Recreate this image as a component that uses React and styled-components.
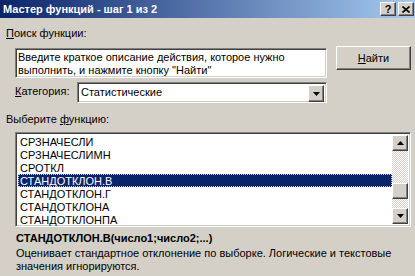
import React from 'react'
import styled, { createGlobalStyle, css } from 'styled-components'

const GlobalStyle = createGlobalStyle`
    html, body {
        margin: 0;
        padding: 0;
        background: #d4d0c8;
    }
    body {
        font-family: 'Liberation Sans', Arial, sans-serif;
        font-size: 11px;
        color: #000;
    }
    * {
        box-sizing: border-box;
    }
`

const raised = css`
    border: 1px solid;
    border-color: #fff #404040 #404040 #fff;
    box-shadow: inset -1px -1px #808080, inset 1px 1px #d4d0c8;
    background: #d4d0c8;
`

const sunken = css`
    border: 1px solid;
    border-color: #808080 #fff #fff #808080;
    box-shadow: inset 1px 1px #404040, inset -1px -1px #d4d0c8;
    background: #fff;
`

const Dialog = styled.div`
    width: 415px;
    height: 276px;
    background: #d4d0c8;
    overflow: hidden;
    display: flex;
    flex-direction: column;
`

const TitleBar = styled.div`
    height: 18px;
    flex: none;
    display: flex;
    align-items: center;
    padding: 0 1px 0 3px;
    background: linear-gradient(to right, #0a246a, #a6caf0);
    color: #fff;
    font-weight: bold;
    line-height: 13px;
`

const TitleButtons = styled.div`
    margin-left: auto;
    display: flex;
    gap: 2px;
`

const CaptionButton = styled.div`
    ${raised};
    width: 16px;
    height: 14px;
    display: flex;
    align-items: center;
    justify-content: center;
    color: #000;
    font-weight: bold;
    font-size: 11px;
    line-height: 11px;
`

const Content = styled.div`
    padding: 9px 4px 0 6px;
    display: flex;
    flex-direction: column;
`

const Label = styled.div`
    line-height: 13px;
    height: 13px;
    margin-top: ${props => props.mt || 0}px;
`

const U = styled.span`
    text-decoration: underline;
`

const SearchRow = styled.div`
    display: flex;
    align-items: flex-start;
    gap: 9px;
    margin: 6px 0 0 9px;
`

const SearchBox = styled.div`
    ${sunken};
    width: 312px;
    height: 30px;
    margin-top: 2px;
    padding: 2px 2px 0;
    line-height: 13px;
`

const PushButton = styled.div`
    ${raised};
    width: 75px;
    height: 24px;
    display: flex;
    align-items: center;
    justify-content: center;
    line-height: 13px;
`

const CategoryRow = styled.div`
    display: flex;
    align-items: center;
    margin: 4px 0 0 9px;
`

const CategoryLabel = styled.div`
    width: 62px;
    line-height: 13px;
    margin-top: -3px;
`

const Combo = styled.div`
    ${sunken};
    width: 250px;
    height: 21px;
    padding: 2px;
    display: flex;
    align-items: stretch;
`

const ComboText = styled.div`
    flex: 1;
    padding: 1px 0 0 1px;
    line-height: 13px;
`

const ArrowButton = styled.div`
    ${raised};
    width: 16px;
    height: ${props => props.h || 16}px;
    flex: none;
    display: flex;
    align-items: center;
    justify-content: center;
`

const ListBox = styled.div`
    ${sunken};
    width: 396px;
    height: 95px;
    margin: 6px 0 0 9px;
    padding: 2px;
    display: flex;
`

const Items = styled.div`
    flex: 1;
`

const Item = styled.div`
    height: 13px;
    padding: 2px 0 0 2px;
    line-height: 11px;
    white-space: nowrap;
    ${props =>
        props.selected &&
        css`
            background: #0a246a;
            color: #fff;
            outline: 1px dotted #d4d0c8;
            outline-offset: -1px;
        `}
`

const ScrollBar = styled.div`
    width: 16px;
    flex: none;
    display: flex;
    flex-direction: column;
`

const Track = styled.div`
    flex: 1;
    background-color: #fff;
    background-image: conic-gradient(#fff 25%, #d4d0c8 0 50%, #fff 0 75%, #d4d0c8 0);
    background-size: 2px 2px;
`

const Thumb = styled.div`
    ${raised};
    width: 16px;
    height: 16px;
    margin-top: 32px;
`

const Signature = styled.div`
    font-weight: bold;
    line-height: 13px;
    margin: 5px 0 0 10px;
    white-space: nowrap;
`

const Description = styled.div`
    line-height: 13px;
    margin: 2px 0 0 10px;
`

const Arrow = ({ down }) => (
    <svg width="7" height="4" viewBox="0 0 7 4">
        <polygon points={down ? '0,0 7,0 3.5,4' : '0,4 7,4 3.5,0'} fill="#000" />
    </svg>
)

const CloseGlyph = () => (
    <svg width="8" height="7" viewBox="0 0 8 7">
        <path d="M0.5 0.5 L7.5 6.5 M7.5 0.5 L0.5 6.5" stroke="#000" strokeWidth="1.6" />
    </svg>
)

const functions = [
    'СРЗНАЧЕСЛИ',
    'СРЗНАЧЕСЛИМН',
    'СРОТКЛ',
    'СТАНДОТКЛОН.В',
    'СТАНДОТКЛОН.Г',
    'СТАНДОТКЛОНА',
    'СТАНДОТКЛОНПА',
]

const selected = 'СТАНДОТКЛОН.В'

const App = () => (
    <Dialog>
        <GlobalStyle />
        <TitleBar>
            Мастер функций - шаг 1 из 2
            <TitleButtons>
                <CaptionButton>?</CaptionButton>
                <CaptionButton>
                    <CloseGlyph />
                </CaptionButton>
            </TitleButtons>
        </TitleBar>
        <Content>
            <Label>
                <U>П</U>оиск функции:
            </Label>
            <SearchRow>
                <SearchBox>
                    Введите краткое описание действия, которое нужно
                    <br />
                    выполнить, и нажмите кнопку "Найти"
                </SearchBox>
                <PushButton>
                    <span>
                        <U>Н</U>айти
                    </span>
                </PushButton>
            </SearchRow>
            <CategoryRow>
                <CategoryLabel>
                    <U>К</U>атегория:
                </CategoryLabel>
                <Combo>
                    <ComboText>Статистические</ComboText>
                    <ArrowButton h={17}>
                        <Arrow down />
                    </ArrowButton>
                </Combo>
            </CategoryRow>
            <Label mt={10}>
                Выберите <U>ф</U>ункцию:
            </Label>
            <ListBox>
                <Items>
                    {functions.map(name => (
                        <Item key={name} selected={name === selected}>
                            {name}
                        </Item>
                    ))}
                </Items>
                <ScrollBar>
                    <ArrowButton>
                        <Arrow />
                    </ArrowButton>
                    <Track>
                        <Thumb />
                    </Track>
                    <ArrowButton>
                        <Arrow down />
                    </ArrowButton>
                </ScrollBar>
            </ListBox>
            <Signature>СТАНДОТКЛОН.В(число1;число2;...)</Signature>
            <Description>
                Оценивает стандартное отклонение по выборке. Логические и текстовые
                значения игнорируются.
            </Description>
        </Content>
    </Dialog>
)

export default App
